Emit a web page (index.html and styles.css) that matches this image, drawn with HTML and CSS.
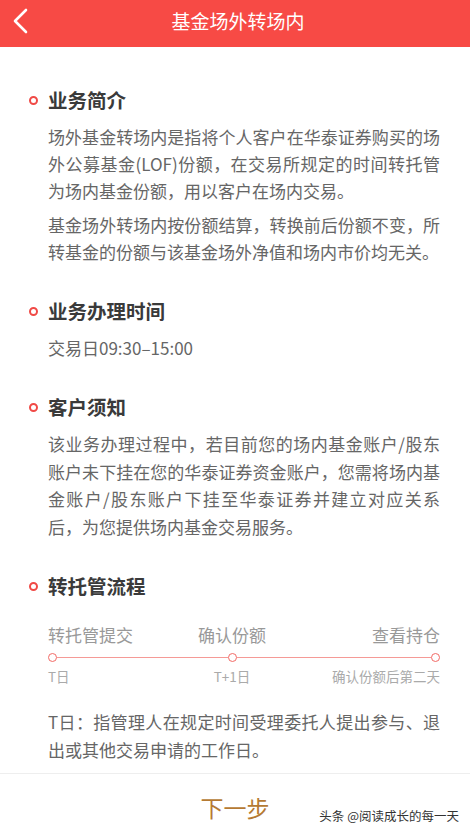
FILE: index.html
```html
<!DOCTYPE html>
<html lang="zh">
<head>
<meta charset="utf-8">
<link rel="stylesheet" href="styles.css">
</head>
<body>
<header class="topbar">
  <svg class="back" width="20" height="26" viewBox="0 0 20 26"><polyline points="15,2 4,13 15,24" fill="none" stroke="#fff" stroke-width="2.6" stroke-linecap="round" stroke-linejoin="round"/></svg>
  <h1 class="title">基金场外转场内</h1>
</header>
<main class="content">
  <section class="sec sec-first">
    <h2 class="sec-title"><span class="ring"></span>业务简介</h2>
    <p class="txt">场外基金转场内是指将个人客户在华泰证券购买的场外公募基金(LOF)份额，在交易所规定的时间转托管为场内基金份额，用以客户在场内交易。</p>
    <p class="txt txt-next">基金场外转场内按份额结算，转换前后份额不变，所转基金的份额与该基金场外净值和场内市价均无关。</p>
  </section>
  <section class="sec">
    <h2 class="sec-title"><span class="ring"></span>业务办理时间</h2>
    <p class="txt">交易日09:30–15:00</p>
  </section>
  <section class="sec">
    <h2 class="sec-title"><span class="ring"></span>客户须知</h2>
    <p class="txt txt-long">该业务办理过程中，若目前您的场内基金账户/股东账户未下挂在您的华泰证券资金账户，您需将场内基金账户/股东账户下挂至华泰证券并建立对应关系后，为您提供场内基金交易服务。</p>
  </section>
  <section class="sec">
    <h2 class="sec-title"><span class="ring"></span>转托管流程</h2>
    <div class="flow">
      <div class="flow-row flow-labels">
        <span class="c1">转托管提交</span><span class="c2">确认份额</span><span class="c3">查看持仓</span>
      </div>
      <div class="track">
        <span class="dot"></span><span class="seg seg1"></span><span class="dot"></span><span class="seg seg2"></span><span class="dot"></span>
      </div>
      <div class="flow-row flow-sub">
        <span class="c1">T日</span><span class="c2">T+1日</span><span class="c3">确认份额后第二天</span>
      </div>
    </div>
    <p class="txt note">T日：指管理人在规定时间受理委托人提出参与、退出或其他交易申请的工作日。</p>
  </section>
</main>
<footer class="bottom">
  <button class="next">下一步</button>
  <span class="mark">头条 @阅读成长的每一天</span>
</footer>
</body>
</html>
```
FILE: styles.css
```css
* { box-sizing: border-box; }
html, body { margin: 0; padding: 0; }
body {
  width: 470px;
  height: 834px;
  overflow: hidden;
  background: #fff;
  font-family: "Noto Sans CJK SC", "Noto Sans", sans-serif;
  position: relative;
}
.topbar {
  height: 47px;
  background: #f74a45;
  display: flex;
  align-items: center;
  padding-bottom: 6px;
  position: relative;
}
.back { margin-left: 11px; display: block; }
.title {
  position: absolute;
  left: 0; right: 0; top: 0;
  height: 41px;
  line-height: 41px;
  margin: 0;
  padding-left: 6px;
  text-align: center;
  color: #fff;
  font-size: 19px;
  font-weight: 400;
}
.content { padding: 0 30px 0 48px; }
.sec { margin-top: 32px; }
.sec-first { margin-top: 39px; }
.sec-title {
  margin: 0;
  font-size: 19.5px;
  line-height: 28px;
  font-weight: 700;
  color: #3a3a3a;
  position: relative;
}
.ring {
  position: absolute;
  left: -19px;
  top: 10px;
  width: 9px;
  height: 9px;
  border: 2px solid #f04a46;
  border-radius: 50%;
}
.txt {
  margin: 9px 0 0;
  font-size: 17px;
  line-height: 27px;
  color: #666;
  text-align: justify;
}
.txt-next { margin-top: 7px; }
.txt-long { line-height: 27.6px; }
.flow { margin-top: 22px; }
.flow-row {
  display: grid;
  grid-template-columns: 136px 96px 1fr;
}
.flow-row .c1 { text-align: left; }
.flow-row .c2 { text-align: center; }
.flow-row .c3 { text-align: right; }
.flow-labels { font-size: 17px; line-height: 26px; color: #999; }
.track {
  display: flex;
  align-items: center;
  height: 18px;
}
.dot {
  width: 9px;
  height: 9px;
  border: 1.5px solid #f26a66;
  border-radius: 50%;
  background: #fff;
  flex: none;
}
.seg { height: 1.5px; background: #f59a96; }
.seg1 { width: 171px; flex: none; }
.seg2 { flex: 1; }
.flow-sub { font-size: 13.5px; line-height: 20px; color: #aaa; }
.note { margin-top: 22px; line-height: 28px; }
.bottom {
  position: absolute;
  left: 0; right: 0; bottom: 0;
  height: 61px;
  border-top: 1px solid #eee;
  background: #fff;
  display: flex;
  align-items: center;
  justify-content: center;
}
.next {
  background: none;
  border: 0;
  padding: 0;
  font-family: inherit;
  font-size: 23px;
  color: #b57a33;
  margin-top: 5px;
}
.mark {
  position: absolute;
  right: 11px;
  bottom: 9px;
  font-size: 12.5px;
  color: #333;
  text-shadow: 0 0 2px #fff;
}
```
